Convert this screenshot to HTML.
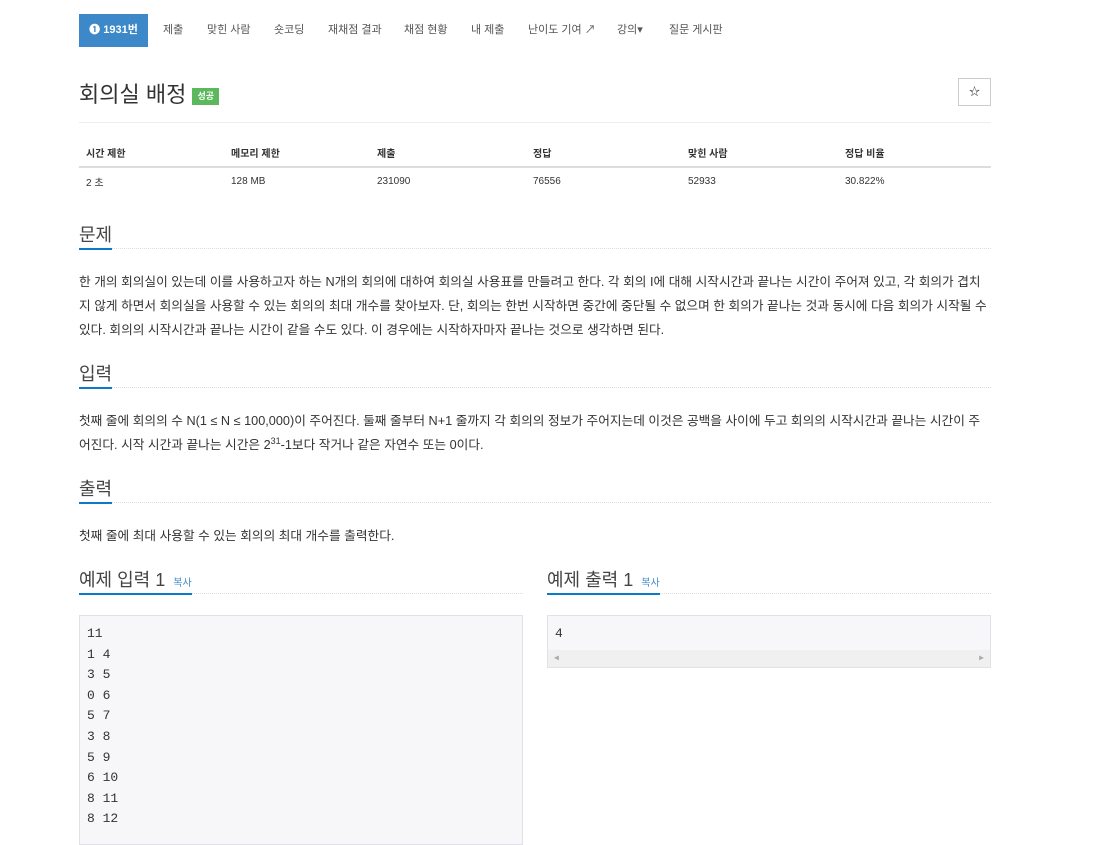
<!DOCTYPE html>
<html><head><meta charset="utf-8"><style>
*{box-sizing:border-box}
body{margin:0;background:#fff;font-family:"Liberation Sans","Noto Sans CJK KR",sans-serif;color:#333;font-size:13px}
.nav{position:absolute;left:0;top:14px;height:33px;font-size:11px;color:#555;width:1110px}
.nav div{position:absolute;top:0;line-height:33px;white-space:nowrap}
.nav .a{left:79px;width:69px;background:#3d88c9;color:#fff;font-weight:bold;text-align:center}
h1{position:absolute;left:79px;top:77px;margin:0;font-size:22px;font-weight:normal;color:#333}
.badge{display:inline-block;background:#5cb85c;color:#fff;font-size:9px;padding:0 5px;line-height:17px;vertical-align:middle;margin-left:0;font-weight:bold}
.star{position:absolute;left:958px;top:78px;width:33px;height:28px;border:1px solid #ccc;text-align:center;line-height:26px;font-size:11px}
.hr{position:absolute;left:79px;width:912px;top:122px;border-top:1px solid #eee}
table{position:absolute;left:79px;top:138px;width:912px;border-collapse:collapse;font-size:10px}
th{text-align:left;padding:6px 7px;border-bottom:2px solid #ddd;height:29px}
td{padding:6px 7px;height:28px;color:#333}
.h{position:absolute;left:79px;font-size:18px;color:#444;border-bottom:1px dotted #ddd;height:28px}
.h span.t{display:inline-block;border-bottom:2px solid #0c7ac9;height:29px;padding-right:0}
.h .cp{font-size:10px;color:#428bca;margin-left:3px}
p{position:absolute;left:79px;width:912px;margin:0;font-size:12.7px;line-height:24px;color:#333}
pre{position:absolute;margin:0;background:#f7f7f9;border:1px solid #e1e1e8;font-family:"Liberation Mono","DejaVu Sans Mono",monospace;font-size:13px;line-height:20.6px;padding:8px 7px;color:#333}
</style></head><body>
<div class="nav"><div class="a">❶ 1931번</div><div style="left:163px">제출</div><div style="left:207px">맞힌 사람</div><div style="left:274px">숏코딩</div><div style="left:328px">재채점 결과</div><div style="left:404px">채점 현황</div><div style="left:471px">내 제출</div><div style="left:528px">난이도 기여 ↗</div><div style="left:617px">강의▾</div><div style="left:669px">질문 게시판</div></div>
<h1>회의실 배정 <span class="badge">성공</span></h1>
<div class="star">☆</div>
<div class="hr"></div>
<table><tr><th style="width:145px">시간 제한</th><th style="width:146px">메모리 제한</th><th style="width:156px">제출</th><th style="width:155px">정답</th><th style="width:157px">맞힌 사람</th><th>정답 비율</th></tr>
<tr><td>2 초</td><td>128 MB</td><td>231090</td><td>76556</td><td>52933</td><td>30.822%</td></tr></table>
<div class="h" style="top:221px;width:912px"><span class="t">문제</span></div>
<p style="top:270px">한 개의 회의실이 있는데 이를 사용하고자 하는 N개의 회의에 대하여 회의실 사용표를 만들려고 한다. 각 회의 I에 대해 시작시간과 끝나는 시간이 주어져 있고, 각 회의가 겹치지 않게 하면서 회의실을 사용할 수 있는 회의의 최대 개수를 찾아보자. 단, 회의는 한번 시작하면 중간에 중단될 수 없으며 한 회의가 끝나는 것과 동시에 다음 회의가 시작될 수 있다. 회의의 시작시간과 끝나는 시간이 같을 수도 있다. 이 경우에는 시작하자마자 끝나는 것으로 생각하면 된다.</p>
<div class="h" style="top:360px;width:912px"><span class="t">입력</span></div>
<p style="top:409px">첫째 줄에 회의의 수 N(1 ≤ N ≤ 100,000)이 주어진다. 둘째 줄부터 N+1 줄까지 각 회의의 정보가 주어지는데 이것은 공백을 사이에 두고 회의의 시작시간과 끝나는 시간이 주어진다. 시작 시간과 끝나는 시간은 2<sup style="font-size:9px;line-height:0">31</sup>-1보다 작거나 같은 자연수 또는 0이다.</p>
<div class="h" style="top:475px;width:912px"><span class="t">출력</span></div>
<p style="top:524px">첫째 줄에 최대 사용할 수 있는 회의의 최대 개수를 출력한다.</p>
<div class="h" style="top:566px;width:444px"><span class="t">예제 입력 1 <span class="cp">복사</span></span></div>
<div class="h" style="top:566px;left:547px;width:444px"><span class="t">예제 출력 1 <span class="cp">복사</span></span></div>
<pre style="left:79px;top:615px;width:444px;height:230px">11
1 4
3 5
0 6
5 7
3 8
5 9
6 10
8 11
8 12</pre>
<pre style="left:547px;top:615px;width:444px;height:53px;padding-bottom:0">4
<div style="position:absolute;left:0;right:0;bottom:0;height:17px;background:#f0f0f0;font-size:8px;color:#aaa;line-height:17px;padding:0 6px"><span>◀</span><span style="float:right">▶</span></div></pre>
</body></html>
